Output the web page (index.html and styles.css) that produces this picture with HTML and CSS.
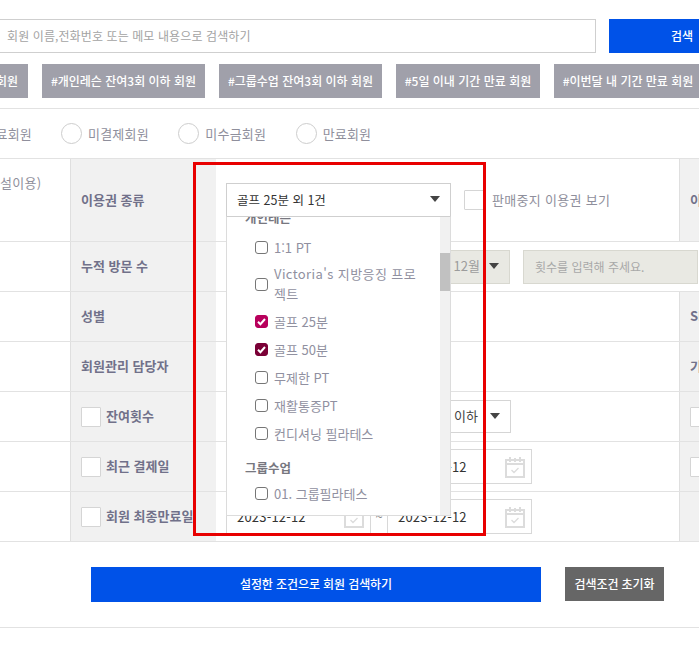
FILE: index.html
```html
<!DOCTYPE html>
<html lang="ko">
<head>
<meta charset="utf-8">
<title>회원 검색</title>
<link rel="stylesheet" href="styles.css">
</head>
<body>
<div class="page">
  <div class="search">
    <div class="search-input">회원 이름,전화번호 또는 메모 내용으로 검색하기</div>
    <div class="search-btn">검색</div>
  </div>
  <div class="tags">
    <div class="tag tag-first">회원</div>
    <div class="tag">#개인레슨 잔여3회 이하 회원</div>
    <div class="tag">#그룹수업 잔여3회 이하 회원</div>
    <div class="tag tag-short">#5일 이내 기간 만료 회원</div>
    <div class="tag tag-last">#이번달 내 기간 만료 회원</div>
  </div>
  <div class="radios">
    <span class="radio-first">료회원</span>
    <label class="radio"><i></i><span>미결제회원</span></label>
    <label class="radio"><i></i><span>미수금회원</span></label>
    <label class="radio"><i></i><span>만료회원</span></label>
  </div>
  <div class="table">
    <div class="row row-tall">
      <div class="c0 c0-top">설이용)</div>
      <div class="lab">이용권 종류</div>
      <div class="val">
        <div class="select-wrap">
          <div class="select"><span>골프 25분 외 1건</span><b class="arrow"></b></div>
          <div class="drop">
            <div class="drop-list">
              <div class="group group-clip">개인레슨</div>
              <div class="opt"><i class="cb"></i><span>1:1 PT</span></div>
              <div class="opt opt-two"><i class="cb"></i><span>Victoria's 지방응징 프로젝트</span></div>
              <div class="opt"><i class="cb on1"><svg viewBox="0 0 13 13"><path d="M3 6.8l2.4 2.4L10 4" fill="none" stroke="#fff" stroke-width="2"/></svg></i><span>골프 25분</span></div>
              <div class="opt"><i class="cb on2"><svg viewBox="0 0 13 13"><path d="M3 6.8l2.4 2.4L10 4" fill="none" stroke="#fff" stroke-width="2"/></svg></i><span>골프 50분</span></div>
              <div class="opt"><i class="cb"></i><span>무제한 PT</span></div>
              <div class="opt"><i class="cb"></i><span>재활통증PT</span></div>
              <div class="opt"><i class="cb"></i><span>컨디셔닝 필라테스</span></div>
              <div class="group">그룹수업</div>
              <div class="opt"><i class="cb"></i><span>01. 그룹필라테스</span></div>
            </div>
            <div class="scroll"><div class="thumb"></div></div>
          </div>
        </div>
        <i class="box box-stop"></i><span class="stop">판매중지 이용권 보기</span>
      </div>
      <div class="lab lab-r">이용</div>
    </div>
    <div class="row">
      <div class="c0"></div>
      <div class="lab">누적 방문 수</div>
      <div class="val">
        <div class="month"><span>12월</span><b class="arrow"></b></div>
        <div class="count">횟수를 입력해 주세요.</div>
      </div>
    </div>
    <div class="row">
      <div class="c0"></div>
      <div class="lab">성별</div>
      <div class="val"></div>
      <div class="lab lab-r">SMS</div>
    </div>
    <div class="row">
      <div class="c0"></div>
      <div class="lab">회원관리 담당자</div>
      <div class="val"></div>
      <div class="lab lab-r">기타</div>
    </div>
    <div class="row">
      <div class="c0"></div>
      <div class="lab"><i class="box"></i>잔여횟수</div>
      <div class="val">
        <div class="under"><span>이하</span><b class="arrow"></b></div>
      </div>
      <div class="lab lab-r"><i class="box"></i></div>
    </div>
    <div class="row">
      <div class="c0"></div>
      <div class="lab"><i class="box"></i>최근 결제일</div>
      <div class="val">
        <div class="date"><span>2023-12-12</span><svg class="cal" viewBox="0 0 20 22"><use href="#cal"/></svg></div>
        <div class="tilde">~</div>
        <div class="date"><span>2023-12-12</span><svg class="cal" viewBox="0 0 20 22"><use href="#cal"/></svg></div>
      </div>
      <div class="lab lab-r"><i class="box"></i></div>
    </div>
    <div class="row">
      <div class="c0"></div>
      <div class="lab"><i class="box"></i>회원 최종만료일</div>
      <div class="val">
        <div class="date"><span>2023-12-12</span><svg class="cal" viewBox="0 0 20 22"><use href="#cal"/></svg></div>
        <div class="tilde">~</div>
        <div class="date"><span>2023-12-12</span><svg class="cal" viewBox="0 0 20 22"><use href="#cal"/></svg></div>
      </div>
      <div class="lab lab-r"></div>
    </div>
  </div>
  <div class="actions">
    <div class="btn-main">설정한 조건으로 회원 검색하기</div>
    <div class="btn-reset">검색조건 초기화</div>
  </div>
  <div class="red-box"></div>
</div>
<svg class="defs" width="0" height="0">
  <symbol id="cal" viewBox="0 0 20 22">
    <path d="M1 4h18v17H1z M1 8h18" fill="none" stroke="#dcdcdc" stroke-width="2"/>
    <path d="M5 1v5M10 2v4M15 1v5" fill="none" stroke="#dcdcdc" stroke-width="2"/>
    <path d="M6.5 14l2.5 2.5 4.5-4.5" fill="none" stroke="#dcdcdc" stroke-width="1.4"/>
  </symbol>
</svg>
</body>
</html>
```
FILE: styles.css
```css
* { box-sizing: border-box; }
html, body { margin: 0; padding: 0; background: #fff; }
body { font-family: "Noto Sans CJK KR", "Noto Sans", sans-serif; font-size: 13px; color: #8b8b9b; }
i { font-style: normal; display: block; flex: none; }
.defs { position: absolute; }
.page { position: relative; width: 699px; height: 658px; overflow: hidden; padding-top: 19px; }

.search { display: flex; gap: 13px; height: 34px; margin-left: -20px; width: 775px; }
.search-input { width: 616px; border: 1px solid #cfcfcf; padding-left: 26px; line-height: 32px; font-size: 12px; color: #a3a3a3; letter-spacing: .1px; }
.search-btn { width: 146px; background: #0052e8; color: #fff; font-size: 12px; font-weight: 500; text-align: center; line-height: 33px; }

.tags { display: flex; gap: 14px; margin: 11px 0 0 -20px; width: 740px; }
.tag { flex: none; width: 163px; height: 34px; background: #a0a0aa; color: #fff; font-size: 12px; font-weight: 500; line-height: 33px; text-align: center; white-space: nowrap; }
.tag-first { width: 48px; text-align: right; padding-right: 10px; }
.tag-short { width: 144px; }
.tag-last { width: 148px; }

.radios { display: flex; align-items: center; margin-top: 10px; border-top: 1px solid #e2e2e2; border-bottom: 1px solid #e2e2e2; height: 51px; font-size: 13px; color: #8f8f9c; letter-spacing: .2px; }
.radio-first { width: 32px; margin-right: 29px; white-space: nowrap; flex: none; direction: rtl; }
.radio { display: flex; align-items: center; gap: 6px; margin-right: 29.5px; white-space: nowrap; }
.radio i { width: 21px; height: 21px; border-radius: 50%; border: 1px solid #cdcdcd; background: #fff; }
.radio span { padding-bottom: 1px; }

.row { display: flex; height: 50px; border-bottom: 1px solid #e2e2e2; }
.row-tall { height: 83px; }
.c0 { width: 70px; flex: none; color: #8f8f9c; white-space: nowrap; letter-spacing: .3px; }
.c0-top { padding-top: 14px; }
.lab { width: 146px; flex: none; display: flex; align-items: center; gap: 5px; background: #f1f1f1; border-left: 1px solid #dfdfdf; padding: 0 0 2px 10px; font-size: 13px; font-weight: 700; color: #71718a; white-space: nowrap; }
.val { width: 463px; flex: none; display: flex; align-items: center; padding-left: 10px; white-space: nowrap; }
.lab-r { width: 20px; overflow: hidden; padding-left: 10px; }
.box { width: 20px; height: 20px; margin-top: 2px; background: #fff; border: 1px solid #d5d5d5; border-radius: 1px; }
.box-stop { margin: 0 8px 0 14px; }
.stop { color: #8f8f9c; letter-spacing: .3px; padding-bottom: 1px; }

.select-wrap { position: relative; width: 224px; flex: none; }
.select { width: 225px; height: 34px; border: 1px solid #cfcfcf; background: #fff; display: flex; align-items: center; justify-content: space-between; padding: 0 10px 2px; color: #333; font-size: 12.5px; }
.arrow { display: block; width: 0; height: 0; border-left: 5.5px solid transparent; border-right: 5.5px solid transparent; border-top: 6px solid #444; flex: none; }

.drop { position: absolute; z-index: 3; left: 0; top: 33px; width: 225px; height: 300px; background: #fff; border: 1px solid #dcdcdc; border-top: 1px solid #cfcfcf; display: flex; overflow: hidden; }
.drop-list { width: 213px; flex: none; padding-left: 18px; color: #9090a0; }
.group { font-weight: 700; color: #77777f; font-size: 12.5px; height: 20px; line-height: 20px; margin-top: 11px; margin-bottom: 1px; }
.group-clip { margin-top: -9px; margin-bottom: 5px; }
.opt { display: flex; align-items: center; gap: 6px; min-height: 28px; padding-left: 10px; }
.opt-two { min-height: 46px; line-height: 20px; }
.opt-two span { white-space: normal; width: 146px; letter-spacing: .4px; }
.cb { width: 13px; height: 13px; border: 1px solid #767676; border-radius: 3px; background: #fff; }
.cb svg { display: block; width: 13px; height: 13px; margin: -1px; }
.on1 { background: #b8005c; border-color: #b8005c; }
.on2 { background: #7a0036; border-color: #7a0036; }
.scroll { width: 10px; flex: none; background: #f1f1f1; padding-top: 36px; }
.thumb { height: 38px; background: #c1c1c1; }

.month { width: 284px; height: 34px; flex: none; background: #e9e9e3; border: 1px solid #d8d8d0; display: flex; align-items: center; justify-content: flex-end; gap: 9px; padding: 0 10px 2px 0; color: #9c9c9c; }
.count { width: 175px; height: 34px; flex: none; margin-left: 13px; background: #e9e9e3; border: 1px solid #d8d8d0; padding-left: 11px; line-height: 31px; font-size: 12px; color: #a8a8a8; }
.under { width: 285px; height: 33px; flex: none; border: 1px solid #d5d5d5; display: flex; align-items: center; justify-content: flex-end; gap: 12px; padding: 0 10px 2px 0; color: #444; }

.date { width: 145px; height: 35px; flex: none; border: 1px solid #d8d8d8; display: flex; align-items: center; justify-content: space-between; padding: 0 6px 0 10px; color: #333; font-size: 13px; letter-spacing: .2px; }
.tilde { width: 16px; height: 35px; flex: none; text-align: center; line-height: 33px; color: #888; border-top: 1px solid #d8d8d8; border-bottom: 1px solid #d8d8d8; }
.cal { width: 20px; height: 22px; flex: none; }

.actions { display: flex; margin-top: 25px; height: 61px; border-bottom: 1px solid #e2e2e2; padding-left: 91px; align-items: flex-start; }
.btn-main { width: 450px; height: 35px; background: #0052e8; color: #fff; font-size: 12px; font-weight: 500; text-align: center; line-height: 33px; letter-spacing: -.1px; }
.btn-reset { width: 99px; height: 34px; margin-left: 24px; background: #666; color: #fff; font-size: 12px; font-weight: 500; text-align: center; line-height: 33px; white-space: nowrap; letter-spacing: -.1px; }

.red-box { position: absolute; z-index: 5; left: 193px; top: 162px; width: 293px; height: 374px; border: 3px solid #e80000; }
```
